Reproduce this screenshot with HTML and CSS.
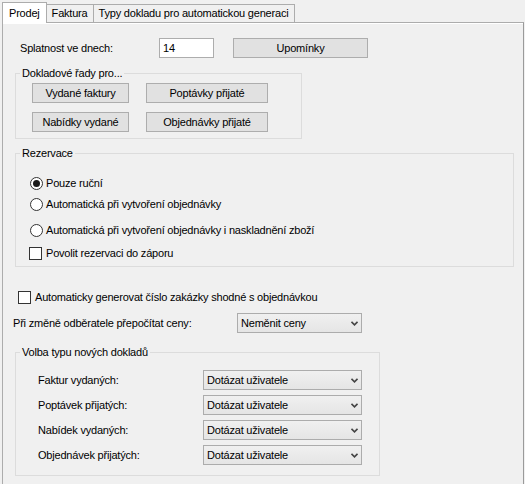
FILE: index.html
```html
<!DOCTYPE html>
<html>
<head>
<meta charset="utf-8">
<link rel="stylesheet" href="styles.css">
</head>
<body>
<div class="tabs">
  <div class="tab active">Prodej</div>
  <div class="tab">Faktura</div>
  <div class="tab">Typy dokladu pro automatickou generaci</div>
</div>
<div class="panel">
  <div class="row1">
    <span class="lbl1">Splatnost ve dnech:</span>
    <span class="input">14</span>
    <span class="btn btn-upom">Upomínky</span>
  </div>

  <fieldset class="grp grp1">
    <legend>Dokladové řady pro...</legend>
    <div class="btngrid">
      <span class="btn">Vydané faktury</span>
      <span class="btn">Poptávky přijaté</span>
      <span class="btn">Nabídky vydané</span>
      <span class="btn">Objednávky přijaté</span>
    </div>
  </fieldset>

  <fieldset class="grp grp2">
    <legend>Rezervace</legend>
    <div class="grpbody">
      <div class="opt o1"><span class="radio checked"></span><span>Pouze ruční</span></div>
      <div class="opt o2"><span class="radio"></span><span>Automatická při vytvoření objednávky</span></div>
      <div class="opt o3"><span class="radio"></span><span>Automatická při vytvoření objednávky i naskladnění zboží</span></div>
      <div class="opt o4"><span class="check"></span><span>Povolit rezervaci do záporu</span></div>
    </div>
  </fieldset>

  <div class="opt autogen"><span class="check"></span><span>Automaticky generovat číslo zakázky shodné s objednávkou</span></div>

  <div class="pricerow">
    <span class="lbl2">Při změně odběratele přepočítat ceny:</span>
    <span class="select sel-price">Neměnit ceny<svg class="arrow" width="7" height="5" viewBox="0 0 7 5"><polyline points="0.5,0.8 3.5,3.8 6.5,0.8" fill="none" stroke="#444" stroke-width="1.6"/></svg></span>
  </div>

  <fieldset class="grp grp3">
    <legend>Volba typu nových dokladů</legend>
    <div class="grpbody">
      <div class="selrow first"><span class="lbl3">Faktur vydaných:</span><span class="select sel-doc">Dotázat uživatele<svg class="arrow" width="7" height="5" viewBox="0 0 7 5"><polyline points="0.5,0.8 3.5,3.8 6.5,0.8" fill="none" stroke="#444" stroke-width="1.6"/></svg></span></div>
      <div class="selrow"><span class="lbl3">Poptávek přijatých:</span><span class="select sel-doc">Dotázat uživatele<svg class="arrow" width="7" height="5" viewBox="0 0 7 5"><polyline points="0.5,0.8 3.5,3.8 6.5,0.8" fill="none" stroke="#444" stroke-width="1.6"/></svg></span></div>
      <div class="selrow"><span class="lbl3">Nabídek vydaných:</span><span class="select sel-doc">Dotázat uživatele<svg class="arrow" width="7" height="5" viewBox="0 0 7 5"><polyline points="0.5,0.8 3.5,3.8 6.5,0.8" fill="none" stroke="#444" stroke-width="1.6"/></svg></span></div>
      <div class="selrow"><span class="lbl3">Objednávek přijatých:</span><span class="select sel-doc">Dotázat uživatele<svg class="arrow" width="7" height="5" viewBox="0 0 7 5"><polyline points="0.5,0.8 3.5,3.8 6.5,0.8" fill="none" stroke="#444" stroke-width="1.6"/></svg></span></div>
    </div>
  </fieldset>
</div>
</body>
</html>
```
FILE: styles.css
```css
* { box-sizing: border-box; }
html, body { margin: 0; padding: 0; }
body {
  background: #f0f0f0;
  font-family: "Liberation Sans", Arial, sans-serif;
  font-size: 11px;
  letter-spacing: -0.2px;
  color: #000;
  width: 525px;
  height: 484px;
  overflow: hidden;
}
.tabs {
  display: flex;
  align-items: flex-end;
  height: 22px;
  padding-left: 2px;
}
.tab {
  height: 18px;
  border: 1px solid #acacac;
  border-bottom: none;
  background: #f0f0f0;
  padding: 0 5px;
  line-height: 17px;
  margin-left: -1px;
  white-space: nowrap;
}
.tab:last-child { padding: 0 6px 0 5px; }
.tab:first-child { margin-left: 0; }
.tab.active {
  position: relative;
  z-index: 1;
  height: 21px;
  margin-bottom: -1px;
  background: #fff;
  padding: 0 6px;
  line-height: 21px;
}
.panel {
  margin-left: 2px;
  width: 522px;
  height: 480px;
  border: 1px solid #acacac;
  border-right-color: #9a9a9a;
  box-shadow: inset 0 1px 0 #fff;
  padding: 0 0 0 10px;
}
.row1 {
  display: flex;
  align-items: center;
  height: 20px;
  margin-top: 15px;
  padding-left: 7px;
}
.lbl1 { width: 139px; }
.input {
  width: 55px;
  height: 20px;
  background: #fff;
  border: 1px solid #adadad;
  padding-left: 3px;
  line-height: 18px;
}
.btn {
  display: flex;
  align-items: center;
  justify-content: center;
  height: 20px;
  background: #e1e1e1;
  border: 1px solid #adadad;
}
.btn-upom { width: 135px; margin-left: 19px; }

.grp {
  margin: 0 0 0 2px;
  padding: 0;
  border: 1px solid #dcdcdc;
  min-width: 0;
}
.grp legend {
  margin-left: 4px;
  padding: 0 2px;
  line-height: 12px;
  height: 12px;
}
.grp1 { width: 287px; margin-top: 9px; padding-bottom: 6px; }
.btngrid {
  display: grid;
  grid-template-columns: 97px 122px;
  column-gap: 17px;
  row-gap: 9px;
  margin: 4px 0 0 16px;
}
.grp2 { width: 499px; margin-top: 8px; padding-bottom: 6px; }
.grp2 .grpbody { padding-left: 13px; }
.opt {
  display: flex;
  align-items: center;
  height: 14px;
  white-space: nowrap;
}
.o1 { margin-top: 17px; }
.o2 { margin-top: 7px; }
.o3 { margin-top: 12px; }
.o4 { margin-top: 9px; }
.radio {
  width: 13px;
  height: 13px;
  border: 1px solid #333;
  border-radius: 50%;
  background: #fff;
  margin-left: 1px;
  margin-right: 3px;
  display: flex;
  align-items: center;
  justify-content: center;
  flex: none;
}
.radio.checked::after {
  content: "";
  width: 7px;
  height: 7px;
  border-radius: 50%;
  background: #1a1a1a;
}
.check {
  width: 13px;
  height: 13px;
  border: 1px solid #333;
  background: #fff;
  margin-right: 4px;
  flex: none;
}
.autogen { margin-top: 23px; margin-left: 5px; }
.pricerow {
  display: flex;
  align-items: center;
  height: 20px;
  margin-top: 9px;
}
.lbl2 { width: 224px; }
.select {
  display: flex;
  align-items: center;
  height: 20px;
  border: 1px solid #acacac;
  background: linear-gradient(#f0f0f0, #e5e5e5);
  padding-left: 3px;
  white-space: nowrap;
}
.select .arrow {
  margin-left: auto;
  margin-right: 3px;
  margin-top: 1px;
}
.sel-price { width: 125px; }
.grp3 { width: 365px; margin-top: 13px; padding-bottom: 10px; }
.grp3 .grpbody { padding-left: 22px; }
.selrow {
  display: flex;
  align-items: center;
  height: 20px;
  margin-top: 5px;
}
.selrow.first { margin-top: 12px; }
.lbl3 { width: 165px; }
.sel-doc { width: 159px; }
```
